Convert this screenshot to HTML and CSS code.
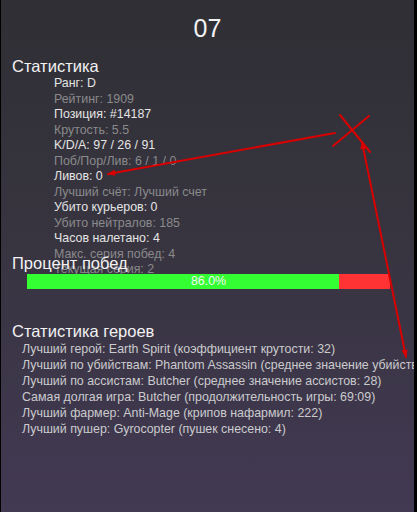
FILE: index.html
```html
<!DOCTYPE html>
<html lang="ru">
<head>
<meta charset="utf-8">
<title>07</title>
<link rel="stylesheet" href="styles.css">
</head>
<body>
<div class="screen">
  <header class="top">07</header>

  <section class="stats">
    <h2 class="title">Статистика</h2>
    <ul class="stat-list">
      <li class="hi">Ранг: D</li>
      <li class="lo">Рейтинг: 1909</li>
      <li class="hi">Позиция: #14187</li>
      <li class="lo">Крутость: 5.5</li>
      <li class="hi">K/D/A: 97 / 26 / 91</li>
      <li class="lo">Поб/Пор/Лив: 6 / 1 / 0</li>
      <li class="hi">Ливов: 0</li>
      <li class="lo">Лучший счёт: Лучший счет</li>
      <li class="hi">Убито курьеров: 0</li>
      <li class="lo">Убито нейтралов: 185</li>
      <li class="hi">Часов налетано: 4</li>
      <li class="lo">Макс. серия побед: 4</li>
      <li class="lo">Текущая серия: 2</li>
    </ul>
  </section>

  <section class="winrate">
    <h2 class="title">Процент побед</h2>
    <div class="bar">
      <div class="bar-win" style="width: 86%"></div>
      <div class="bar-loss"></div>
      <span class="bar-label">86.0%</span>
    </div>
  </section>

  <section class="heroes">
    <h2 class="title">Статистика героев</h2>
    <ul class="hero-list">
      <li>Лучший герой: Earth Spirit (коэффициент крутости: 32)</li>
      <li>Лучший по убийствам: Phantom Assassin (среднее значение убийств: 12)</li>
      <li>Лучший по ассистам: Butcher (среднее значение ассистов: 28)</li>
      <li>Самая долгая игра: Butcher (продолжительность игры: 69:09)</li>
      <li>Лучший фармер: Anti-Mage (крипов нафармил: 222)</li>
      <li>Лучший пушер: Gyrocopter (пушек снесено: 4)</li>
    </ul>
  </section>

  <!-- red pen marks drawn on top of the screen -->
  <svg class="marks" width="413" height="512" viewBox="0 0 413 512">
    <defs>
      <marker id="tip" viewBox="0 0 10 10" refX="9" refY="5" markerWidth="4" markerHeight="4" orient="auto-start-reverse">
        <path d="M0 1 L10 5 L0 9 Z" fill="#d80000"/>
      </marker>
    </defs>
    <g stroke="#d80000" stroke-width="2" fill="none" stroke-linecap="round">
      <line x1="334" y1="133" x2="107" y2="174" marker-end="url(#tip)"/>
      <line x1="339" y1="115" x2="369" y2="152"/>
      <line x1="368" y1="116" x2="332" y2="146"/>
      <line x1="361" y1="142" x2="405" y2="357" marker-start="url(#tip)" marker-end="url(#tip)"/>
    </g>
  </svg>
</div>
</body>
</html>
```
FILE: styles.css
```css
html, body {
  margin: 0;
  padding: 0;
  background: #000;
}

body {
  font-family: "Liberation Sans", Arial, sans-serif;
  width: 417px;
  height: 512px;
  overflow: hidden;
}

.screen {
  position: relative;
  margin-left: 1px;
  width: 413px;
  height: 512px;
  overflow: hidden;
  background: linear-gradient(180deg, #2f2f35 0%, #37343f 45%, #423953 100%);
  color: #e8e8e8;
}

.top {
  height: 57px;
  box-sizing: border-box;
  padding-top: 14px;
  text-align: center;
  font-size: 25px;
  line-height: 28px;
  color: #f2f2f2;
}

.title {
  margin: 0;
  padding-left: 11px;
  font-size: 16.5px;
  font-weight: normal;
  line-height: 18px;
  color: #f2f2f2;
  white-space: nowrap;
}

ul {
  list-style: none;
  margin: 0;
  padding: 0;
}

.stats {
  position: relative;
  z-index: 1;
  height: 197px;
}

.stat-list {
  margin-top: 1px;
  padding-left: 53px;
  font-size: 12.4px;
  line-height: 15.5px;
  white-space: nowrap;
}

.stat-list .hi { color: #e4e4e4; }
.stat-list .lo { color: #8a8a8c; }

.winrate {
  position: relative;
  z-index: 2;
}

.bar {
  position: relative;
  display: flex;
  margin: 2px 0 0 26px;
  width: 363px;
  height: 15px;
}

.bar-win { background: #33ff33; }
.bar-loss { flex: 1; background: #ff3333; }

.bar-label {
  position: absolute;
  inset: 0;
  text-align: center;
  font-size: 12.4px;
  line-height: 15px;
  color: #f4f4f4;
}

.heroes {
  margin-top: 33px;
}

.hero-list {
  margin-top: 1px;
  padding-left: 21px;
  font-size: 12.4px;
  line-height: 16px;
  color: #cbcbcd;
  white-space: nowrap;
}

.marks {
  position: absolute;
  left: 0;
  top: 0;
  z-index: 5;
  pointer-events: none;
}
```
